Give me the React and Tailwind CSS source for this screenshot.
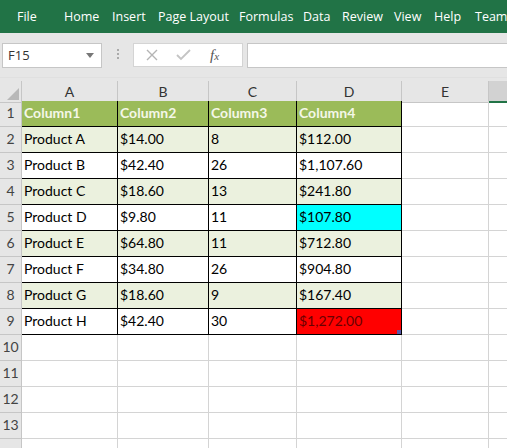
import React from "react";

const tabs = [
  ["File", "w-[47px] ml-[17px]"],
  ["Home", "w-[48px]"],
  ["Insert", "w-[46px]"],
  ["Page Layout", "w-[81px]"],
  ["Formulas", "w-[64px]"],
  ["Data", "w-[39px]"],
  ["Review", "w-[52px]"],
  ["View", "w-[40px]"],
  ["Help", "w-[41px]"],
  ["Team", "w-[32px]"],
];

const data = [
  ["Product A", "$14.00", "8", "$112.00"],
  ["Product B", "$42.40", "26", "$1,107.60"],
  ["Product C", "$18.60", "13", "$241.80"],
  ["Product D", "$9.80", "11", "$107.80"],
  ["Product E", "$64.80", "11", "$712.80"],
  ["Product F", "$34.80", "26", "$904.80"],
  ["Product G", "$18.60", "9", "$167.40"],
  ["Product H", "$42.40", "30", "$1,272.00"],
];

const cols = ["A", "B", "C", "D", "E", ""];
const gridCols = "grid grid-cols-[22px_96px_91px_88px_105px_87px_1fr]";

function RowHeader({ n }) {
  return (
    <div className="h-[26px] bg-[#e6e6e6] border-r border-b border-[#c6c6c6] flex items-end justify-center pb-[3px] text-[14px] text-[#444]">
      {n}
    </div>
  );
}

export default function App() {
  return (
    <div className="w-[507px] h-[448px] overflow-hidden bg-white font-['Lato',sans-serif] text-black">
      {/* Ribbon tabs */}
      <div className="h-[33px] bg-[#217346] flex items-center pt-[1px] text-white text-[12.5px] font-['Open_Sans',sans-serif] whitespace-nowrap overflow-hidden">
        {tabs.map(([t, m]) => (
          <span key={t} className={`${m} shrink-0`}>{t}</span>
        ))}
      </div>
      {/* Formula bar */}
      <div className="h-[45px] bg-[#e6e6e6] flex items-start pt-[10px] border-b border-[#e0e0e0]">
        <div className="ml-[2px] w-[100px] h-[25px] bg-white border border-[#c6c6c6] flex items-center justify-between px-[5px] text-[13px] text-[#333] font-['Open_Sans',sans-serif]">
          <span>F15</span>
          <svg width="8" height="5" viewBox="0 0 8 5" className="mr-[2px]"><path d="M0 0h8L4 5z" fill="#777" /></svg>
        </div>
        <div className="w-[31px] flex flex-col items-center gap-[2px] pt-[6px]">
          <span className="w-[2px] h-[2px] bg-[#aaa]" />
          <span className="w-[2px] h-[2px] bg-[#aaa]" />
          <span className="w-[2px] h-[2px] bg-[#aaa]" />
        </div>
        <div className="w-[110px] h-[24px] bg-white border border-[#d4d4d4] flex items-center">
          <svg width="12" height="12" viewBox="0 0 12 12" className="ml-[12px]"><path d="M1 1l10 10M11 1L1 11" stroke="#b4b4b4" strokeWidth="1.4" /></svg>
          <svg width="15" height="12" viewBox="0 0 15 12" className="ml-[18px]"><path d="M1 6l4 4L14 1" stroke="#c4c4c4" strokeWidth="1.8" fill="none" /></svg>
          <span className="ml-[19px] font-['Liberation_Serif',serif] italic text-[15px] text-[#555] leading-none">f<span className="text-[11px]">x</span></span>
        </div>
        <div className="ml-[4px] flex-1 h-[25px] bg-white border-y border-l border-[#c6c6c6]" />
      </div>
      <div className="h-[3px] bg-[#e6e6e6]" />
      {/* Column headers */}
      <div className={`${gridCols} h-[20px]`}>
        <div className="bg-[#e6e6e6] border-r border-b border-[#c6c6c6] relative">
          <svg width="12" height="12" viewBox="0 0 12 12" className="absolute right-[2px] bottom-[2px]"><path d="M12 0V12H0z" fill="#b8b8b8" /></svg>
        </div>
        {cols.map((c, i) => (
          <div
            key={i}
            className={
              i === 5
                ? "bg-[#d2d2d2] border-b-2 border-[#217346]"
                : "bg-[#e6e6e6] border-r border-b border-[#c6c6c6] flex items-center justify-center text-[14px] text-[#333]"
            }
          >
            {c}
          </div>
        ))}
      </div>
      {/* Rows */}
      <div className={gridCols}>
        <RowHeader n={1} />
        {["Column1", "Column2", "Column3", "Column4"].map((h) => (
          <div key={h} className="h-[26px] bg-[#9bbb59] border-r border-b border-black flex items-end pb-[3px] pl-[2px] text-[14px] font-bold text-[#f4f7e8]">
            {h}
          </div>
        ))}
        <div className="h-[26px] border-r border-b border-[#d4d4d4]" />
        <div className="h-[26px] border-b border-[#d4d4d4]" />
        {data.map((row, r) => {
          const band = r % 2 === 0 ? "bg-[#ebf1de]" : "bg-white";
          return (
            <React.Fragment key={r}>
              <RowHeader n={r + 2} />
              {row.map((v, c) => {
                let bg = band;
                let color = "text-black";
                if (c === 3 && r === 3) bg = "bg-[#00ffff]";
                if (c === 3 && r === 7) {
                  bg = "bg-[#ff0000]";
                  color = "text-[#6a0000]";
                }
                return (
                  <div key={c} className={`h-[26px] ${bg} ${color} border-r border-b border-black flex items-end pb-[3px] pl-[2px] text-[14px] relative`}>
                    {v}
                    {c === 3 && r === 7 && (
                      <span className="absolute right-0 bottom-0 w-[4px] h-[4px] bg-[#5a5aa8]" />
                    )}
                  </div>
                );
              })}
              <div className="h-[26px] border-r border-b border-[#d4d4d4]" />
              <div className="h-[26px] border-b border-[#d4d4d4]" />
            </React.Fragment>
          );
        })}
        {[10, 11, 12, 13, ""].map((n, i) => (
          <React.Fragment key={i}>
            <RowHeader n={n} />
            {[0, 1, 2, 3, 4].map((c) => (
              <div key={c} className="h-[26px] border-r border-b border-[#d4d4d4]" />
            ))}
            <div className="h-[26px] border-b border-[#d4d4d4]" />
          </React.Fragment>
        ))}
      </div>
    </div>
  );
}
